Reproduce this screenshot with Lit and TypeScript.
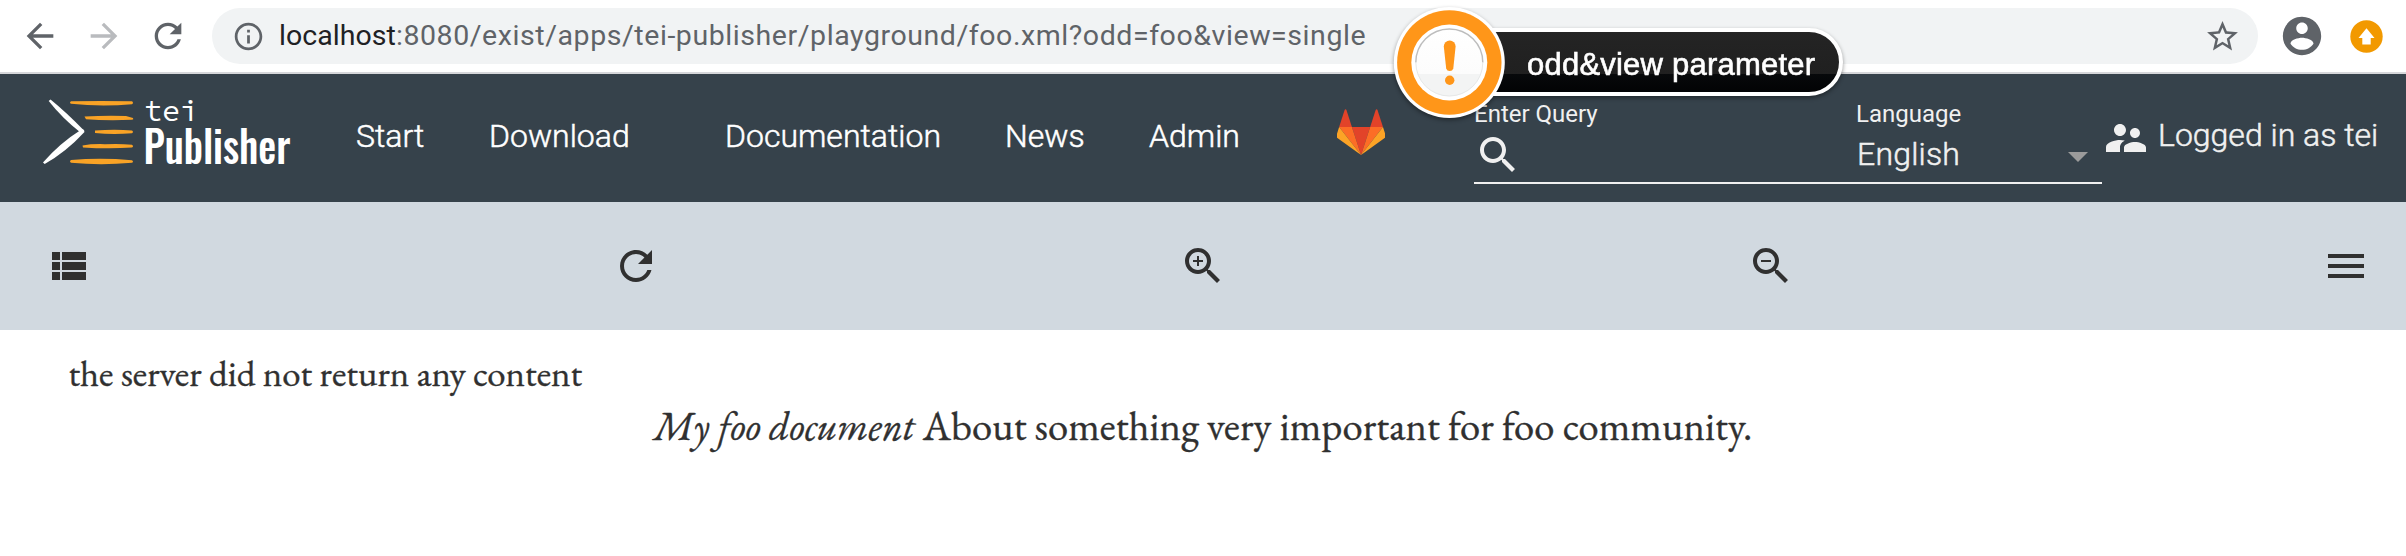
import { LitElement, html, css } from "lit";
import { customElement } from "lit/decorators.js";

const PATHS: Record<string, string> = {
  back: "M20 11H7.83l5.59-5.59L12 4l-8 8 8 8 1.41-1.41L7.83 13H20v-2z",
  forward: "M12 4l-1.41 1.41L16.17 11H4v2h12.17l-5.58 5.59L12 20l8-8z",
  refresh: "M17.65 6.35C16.2 4.9 14.21 4 12 4c-4.42 0-7.99 3.58-7.99 8s3.57 8 7.99 8c3.73 0 6.84-2.55 7.73-6h-2.08c-.82 2.33-3.04 4-5.65 4-3.31 0-6-2.69-6-6s2.69-6 6-6c1.66 0 3.14.69 4.22 1.78L13 11h7V4l-2.35 2.35z",
  info: "M11 17h2v-6h-2v6zm1-15C6.48 2 2 6.48 2 12s4.48 10 10 10 10-4.48 10-10S17.52 2 12 2zm0 18c-4.41 0-8-3.59-8-8s3.59-8 8-8 8 3.59 8 8-3.59 8-8 8zM11 9h2V7h-2v2z",
  star: "M22 9.24l-7.19-.62L12 2 9.19 8.63 2 9.24l5.46 4.73L5.82 21 12 17.27 18.18 21l-1.63-7.03L22 9.24zM12 15.4l-3.76 2.27 1-4.28-3.32-2.88 4.38-.38L12 6.1l1.71 4.04 4.38.38-3.32 2.88 1 4.28L12 15.4z",
  account: "M12 2C6.48 2 2 6.48 2 12s4.48 10 10 10 10-4.48 10-10S17.52 2 12 2zm0 3c1.66 0 3 1.34 3 3s-1.34 3-3 3-3-1.34-3-3 1.34-3 3-3zm0 14.2c-2.5 0-4.71-1.28-6-3.22.03-1.99 4-3.08 6-3.08 1.99 0 5.97 1.09 6 3.08-1.29 1.94-3.5 3.22-6 3.22z",
  list: "M4 9h4V5H4v4zm0 5h4v-4H4v4zm0 5h4v-4H4v4zm5-5h12v-4H9v4zm0 5h12v-4H9v4zM9 5v4h12V5H9z",
  search: "M15.5 14h-.79l-.28-.27C15.41 12.59 16 11.11 16 9.5 16 5.91 13.09 3 9.5 3S3 5.91 3 9.5 5.91 16 9.5 16c1.61 0 3.09-.59 4.23-1.57l.27.28v.79l5 4.99L20.49 19l-4.99-5zm-6 0C7.01 14 5 11.99 5 9.5S7.01 5 9.5 5 14 7.01 14 9.5 11.99 14 9.5 14z",
  menu: "M3 18h18v-2H3v2zm0-5h18v-2H3v2zm0-7v2h18V6H3z",
  people: "M16.5 12c1.38 0 2.49-1.12 2.49-2.5S17.88 7 16.5 7C15.12 7 14 8.12 14 9.5s1.12 2.5 2.5 2.5zM9 11c1.66 0 2.99-1.34 2.99-3S10.66 5 9 5C7.34 5 6 6.34 6 8s1.34 3 3 3zm7.5 3c-1.83 0-5.5.92-5.5 2.75V19h11v-2.25c0-1.83-3.67-2.75-5.5-2.75zM9 13c-2.33 0-7 1.17-7 3.5V19h7v-2.25c0-.85.33-2.34 2.37-3.47C10.5 13.1 9.66 13 9 13z",
};
PATHS.zoomIn = PATHS.search + "M12 10h-2v2H9v-2H7V9h2V7h1v2h2v1z";
PATHS.zoomOut = PATHS.search + "M7 9h5v1H7z";

const icon = (name: string, cls = "") =>
  html`<svg class="icon ${cls}" viewBox="0 0 24 24"><path d=${PATHS[name]}></path></svg>`;

@customElement("browser-bar")
export class BrowserBar extends LitElement {
  static styles = css`
    :host { display: flex; align-items: center; box-sizing: border-box; height: 74px; padding-left: 20px; border-bottom: 2px solid #d6d7da; background: #fff; font-family: Roboto, sans-serif; color: #5f6368; }
    .icon { flex: none; width: 40px; height: 40px; fill: #5f6368; }
    .back { margin-right: 24px; }
    .forward { fill: #b9bbbe; margin-right: 24px; }
    .pill { display: flex; align-items: center; box-sizing: border-box; width: 2046px; height: 56px; margin-left: 24px; padding: 0 17px 0 20px; border-radius: 28px; background: #f1f3f4; }
    .info { width: 33px; height: 33px; margin-right: 14px; }
    .url { flex: 1; font-size: 28.5px; line-height: 56px; letter-spacing: .57px; white-space: nowrap; }
    .host { color: #202124; letter-spacing: .05px; }
    .star { width: 37px; height: 37px; }
    .account { width: 46px; height: 46px; margin: 0 25px 0 21px; }
    .update { width: 33px; height: 33px; }
  `;
  render() {
    return html`
      ${icon("back", "back")}${icon("forward", "forward")}${icon("refresh")}
      <div class="pill">
        ${icon("info", "info")}
        <div class="url"><span class="host">localhost</span>:8080/exist/apps/tei-publisher/playground/foo.xml?odd=foo&amp;view=single</div>
        ${icon("star", "star")}
      </div>
      ${icon("account", "account")}
      <svg class="update" viewBox="0 0 33 33"><circle cx="16.5" cy="16.5" r="16.2" fill="#f29900"></circle><path d="M16.5 8.2 24.5 18H20.7V24.6H12.3V18H8.5Z" fill="#fff"></path></svg>
    `;
  }
}

@customElement("site-header")
export class SiteHeader extends LitElement {
  static styles = css`
    :host { display: flex; align-items: flex-start; height: 128px; background: #36424b; color: #fff; font: 300 32px Roboto, sans-serif; white-space: nowrap; }
    nav, .value, .user { -webkit-text-stroke: .5px currentColor; }
    .logo { flex: none; width: 260px; height: 90px; margin: 20px 0 0 40px; overflow: visible; }
    .tei { font: 400 30px "Source Code Pro", "Liberation Mono", monospace; fill: #fff; }
    .publisher { font: 500 43.5px Oswald, "Open Sans", sans-serif; fill: #fff; }
    nav { display: flex; margin-left: 56px; line-height: 125px; }
    nav span { flex: none; }
    .w1 { width: 133px; } .w2 { width: 236px; } .w3 { width: 280px; } .w4 { width: 144px; } .w5 { width: 188px; }
    .gitlab { flex: none; width: 48px; height: 46px; margin-top: 35px; }
    .fields { display: flex; box-sizing: border-box; width: 628px; height: 84px; margin: 26px 0 0 89px; border-bottom: 2px solid #f0f0f0; color: #f0f0f0; }
    .field { display: flex; flex-direction: column; }
    .query { width: 382px; }
    .language { width: 246px; }
    .label { font-size: 24px; font-weight: 400; line-height: 28px; }
    .icon { flex: none; width: 48px; height: 48px; fill: #f0f0f0; }
    .query .icon { margin-top: 3px; }
    .value { display: flex; align-items: center; justify-content: space-between; padding: 6px 14px 0 1px; line-height: 40px; letter-spacing: .2px; }
    .caret { width: 20px; height: 10px; margin-top: 5px; }
    .user { display: flex; color: #f0f0f0; line-height: 122px; }
    .user .icon { margin: 40px 8px 0 0; }
  `;
  render() {
    return html`
      <svg class="logo" viewBox="40 94 260 90">
        <path d="M50.5 99.5 Q66 112 84.5 131 L81 133 Q62 118 48.7 101Z" fill="#fff"></path>
        <path d="M83 129 L84.5 132 Q66 152 44.7 164 L43 162.5 Q60 143 80 130.5Z" fill="#fff"></path>
        <g fill="#f9a326">
          <path d="M71 101.2 Q101 100.6 132 101.2 Q134 103 132 104.2 Q101 106.8 71 103.8 Q69 102.5 71 101.2Z"></path>
          <path d="M84.5 116.4 Q105 115.5 126 116 L133 118 Q134 119.4 132 119.8 Q106 120.8 86 119.2Z"></path>
          <path d="M95 130.5 Q115 129.2 132 130.5 Q134 132 132 133.2 Q113 134.8 95 133Z"></path>
          <path d="M82.5 145.4 Q92 143.8 105 144.2 Q120 143.4 132 144.8 Q134 146.5 132 147.6 Q108 149.2 83 147.4Z"></path>
          <path d="M71 160 Q101 157.6 132 160.2 Q134 161.5 132 162.7 Q101 165.6 71 162.7 Q69 161.5 71 160Z"></path>
        </g>
        <text class="tei" x="144" y="120.5">tei</text>
        <text class="publisher" x="143.5" y="164" textLength="147" lengthAdjust="spacingAndGlyphs">Publisher</text>
      </svg>
      <nav>
        <span class="w1">Start</span><span class="w2">Download</span><span class="w3">Documentation</span><span class="w4">News</span><span class="w5">Admin</span>
      </nav>
      <svg class="gitlab" viewBox="1.6 0 92.6 89.5" preserveAspectRatio="none">
        <path d="M48 89.5 65.6 35H30.4Z" fill="#e24329"></path>
        <path d="M48 89.5 30.4 35H5.7Z" fill="#fc6d26"></path>
        <path d="M5.7 35 .4 51.7a3.6 3.6 0 0 0 1.3 4.1L48 89.5Z" fill="#fca326"></path>
        <path d="M5.7 35h24.7L19.8 1.9c-.6-1.7-2.9-1.7-3.5 0Z" fill="#e24329"></path>
        <path d="M48 89.5 65.6 35h24.7Z" fill="#fc6d26"></path>
        <path d="m90.3 35 5.3 16.7a3.6 3.6 0 0 1-1.3 4.1L48 89.5Z" fill="#fca326"></path>
        <path d="M90.3 35H65.6L76.2 1.9c.6-1.7 2.9-1.7 3.5 0Z" fill="#e24329"></path>
      </svg>
      <div class="fields">
        <div class="field query"><span class="label">Enter Query</span>${icon("search")}</div>
        <div class="field language">
          <span class="label">Language</span>
          <div class="value"><span>English</span><svg class="caret" viewBox="0 0 20 10"><path d="M0 0H20L10 10Z" fill="#9b9b9b"></path></svg></div>
        </div>
      </div>
      <div class="user">${icon("people")}<span>Logged in as tei</span></div>
    `;
  }
}

@customElement("view-toolbar")
export class ViewToolbar extends LitElement {
  static styles = css`
    :host { display: flex; align-items: center; justify-content: space-between; box-sizing: border-box; height: 128px; padding: 0 36px 0 44px; background: #d1d9e0; }
    .icon { width: 48px; height: 48px; fill: #303030; }
    .menu { margin-left: 8px; }
  `;
  render() {
    return html`${icon("list")}${icon("refresh")}${icon("zoomIn")}${icon("zoomOut")}${icon("menu", "menu")}`;
  }
}

@customElement("callout-note")
export class CalloutNote extends LitElement {
  static styles = css`
    :host { position: absolute; left: 1384px; top: 0; width: 480px; height: 130px; }
    svg { display: block; filter: drop-shadow(0 2px 2px rgba(0, 0, 0, .4)); }
    .label { font: 31px "Liberation Sans", sans-serif; fill: #fff; stroke: #fff; stroke-width: .6px; }
  `;
  render() {
    return html`<svg width="480" height="130" viewBox="1384 0 480 130">
      <defs>
        <linearGradient id="pill" x1="0" y1="32" x2="0" y2="92" gradientUnits="userSpaceOnUse">
          <stop offset="0" stop-color="#242424"></stop><stop offset=".7" stop-color="#202020"></stop>
          <stop offset=".7" stop-color="#07090b"></stop><stop offset="1" stop-color="#020304"></stop>
        </linearGradient>
        <linearGradient id="disc" x1="0" y1="29" x2="0" y2="97" gradientUnits="userSpaceOnUse">
          <stop offset="0" stop-color="#fff"></stop><stop offset=".66" stop-color="#fcfcfc"></stop>
          <stop offset=".66" stop-color="#f3f4f4"></stop><stop offset="1" stop-color="#f3f4f4"></stop>
        </linearGradient>
      </defs>
      <rect x="1440" y="30" width="401" height="64" rx="32" fill="url(#pill)" stroke="#fff" stroke-width="4"></rect>
      <circle cx="1449.3" cy="62.5" r="55.5" fill="#fff"></circle>
      <circle cx="1449.3" cy="62.5" r="52.2" fill="#ff9619"></circle>
      <circle cx="1449.3" cy="62.5" r="38" fill="#fff"></circle>
      <circle cx="1449.3" cy="62.5" r="33.7" fill="url(#disc)"></circle>
      <path d="M1415.8 62.5a33.5 33.5 0 0 1 67 0" fill="none" stroke="#bdbdbd" stroke-width="1.4"></path>
      <path d="M1415.8 62.5a33.5 33.5 0 0 0 67 0" fill="none" stroke="#e6e8e8" stroke-width="1"></path>
      <path d="M1443.8 46.5a5.9 5.9 0 0 1 11.8 0L1453.3 68.5Q1452.5 71 1449.7 71T1446.2 68.5Z" fill="#ff9619"></path>
      <circle cx="1449.7" cy="80.3" r="4.7" fill="#ff9619"></circle>
      <text class="label" x="1527" y="75" textLength="288">odd&amp;view parameter</text>
    </svg>`;
  }
}

@customElement("app-root")
export class AppRoot extends LitElement {
  static styles = css`
    :host { display: block; position: relative; height: 556px; overflow: hidden; background: #fff; color: #303030; font-family: "EB Garamond", "Liberation Serif", serif; white-space: nowrap; }
    .message, .document { -webkit-text-stroke: .35px currentColor; }
    .message { padding: 18px 0 0 68.5px; font-size: 36.9px; line-height: 50px; letter-spacing: .02px; }
    .document { padding-left: 654px; font-size: 40.6px; line-height: 55px; letter-spacing: .1px; }
    .document em { font-size: 39.7px; }
  `;
  render() {
    return html`
      <browser-bar></browser-bar>
      <site-header></site-header>
      <view-toolbar></view-toolbar>
      <div class="message">the server did not return any content</div>
      <div class="document"><em>My foo document</em> About something very important for foo community.</div>
      <callout-note></callout-note>
    `;
  }
}
